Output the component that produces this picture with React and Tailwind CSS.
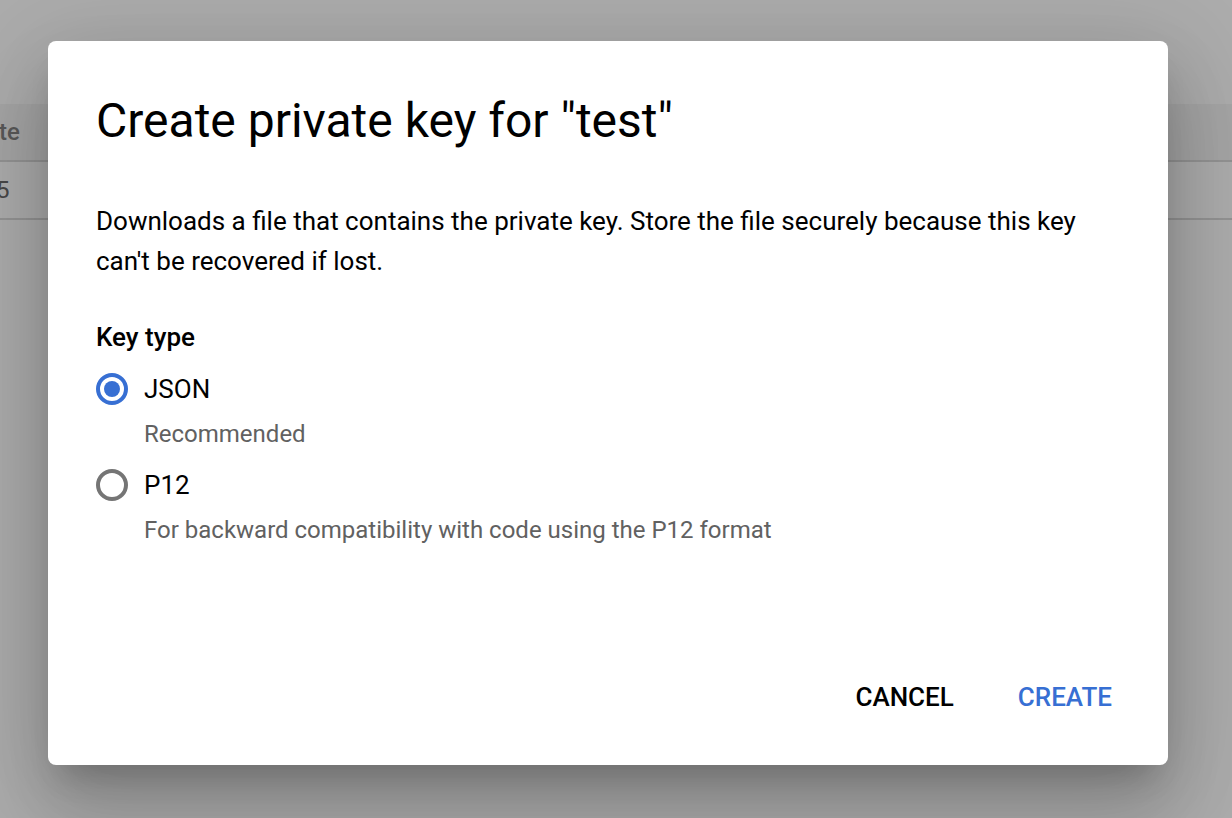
export default function App() {
  return (
    <div className="relative min-h-screen overflow-hidden bg-[#acacac] font-['Roboto',sans-serif]">
      <div aria-hidden="true" className="pt-26">
        <table className="w-full border-separate border-spacing-0 text-left text-2xl text-[#484848]">
          <thead>
            <tr className="bg-[#a5a5a5]">
              <th className="h-[58px] border-b-2 border-[#939393] p-0 font-medium text-[#585858]"><span className="-ml-px">te</span></th>
            </tr>
          </thead>
          <tbody>
            <tr>
              <td className="h-[58px] border-b-2 border-[#939393] p-0"><span className="-ml-1">5</span></td>
            </tr>
          </tbody>
        </table>
      </div>
      <div className="absolute inset-0 pt-[41px] pr-16 pl-12">
        <section
          role="dialog"
          aria-modal="true"
          aria-labelledby="title"
          className="flex min-h-[724px] flex-col rounded-lg bg-white pt-12 pr-10 pb-10 pl-12 text-[26px] leading-10 text-black shadow-[0_22px_30px_-14px_rgba(0,0,0,0.2),0_48px_76px_6px_rgba(0,0,0,0.14),0_18px_92px_16px_rgba(0,0,0,0.12)]"
        >
          <h1 id="title" className="text-5xl leading-16">Create private key for "test"</h1>
          <p className="mt-12 pr-2">
            Downloads a file that contains the private key. Store the file securely because this key can't be recovered if lost.
          </p>
          <fieldset className="mt-9">
            <legend className="font-medium">Key type</legend>
            <Option id="json" label="JSON" hint="Recommended" checked />
            <Option id="p12" label="P12" hint="For backward compatibility with code using the P12 format" />
          </fieldset>
          <div className="mt-auto flex justify-end gap-8">
            <button type="button" className="h-14 px-4 font-medium">CANCEL</button>
            <button type="button" className="h-14 px-4 font-medium text-[#376fd3]">CREATE</button>
          </div>
        </section>
      </div>
    </div>
  );
}

function Option({ id, label, hint, checked }) {
  return (
    <div className="grid grid-cols-[32px_1fr] items-center gap-x-4 pt-3">
      <input
        type="radio"
        id={id}
        name="keyType"
        defaultChecked={checked}
        aria-describedby={id + "-hint"}
        className="grid size-8 appearance-none place-items-center rounded-full border-4 border-[#757575] before:size-4 before:rounded-full checked:border-[#376fd3] checked:before:bg-[#376fd3]"
      />
      <label htmlFor={id}>{label}</label>
      <span id={id + "-hint"} className="col-start-2 mt-1.5 text-2xl leading-[38px] text-[#616161]">{hint}</span>
    </div>
  );
}
